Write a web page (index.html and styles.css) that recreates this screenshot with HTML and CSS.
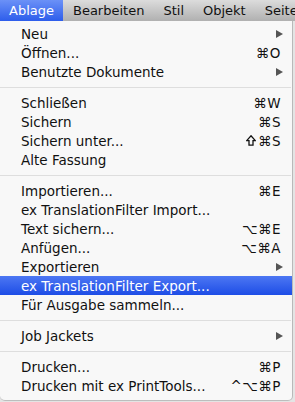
FILE: index.html
```html
<!DOCTYPE html>
<html lang="de">
<head>
<meta charset="utf-8">
<link rel="stylesheet" href="styles.css">
</head>
<body>
<div class="menubar">
  <span class="mb-item active">Ablage</span>
  <span class="mb-item">Bearbeiten</span>
  <span class="mb-item">Stil</span>
  <span class="mb-item">Objekt</span>
  <span class="mb-item">Seite</span>
</div>
<div class="menu">
  <div class="row"><span class="label">Neu</span><span class="arrow"></span></div>
  <div class="row"><span class="label">Öffnen...</span><span class="key">⌘O</span></div>
  <div class="row"><span class="label">Benutzte Dokumente</span><span class="arrow"></span></div>
  <div class="sep"></div>
  <div class="row"><span class="label">Schließen</span><span class="key">⌘W</span></div>
  <div class="row"><span class="label">Sichern</span><span class="key">⌘S</span></div>
  <div class="row"><span class="label">Sichern unter...</span><span class="key"><svg class="shift" width="10" height="11" viewBox="0 0 10 11"><path d="M5 0.8 L9.3 5.6 H7 V10.2 H3 V5.6 H0.7 Z" fill="none" stroke="#111" stroke-width="1.3" stroke-linejoin="miter"/></svg>⌘S</span></div>
  <div class="row"><span class="label">Alte Fassung</span></div>
  <div class="sep"></div>
  <div class="row"><span class="label">Importieren...</span><span class="key">⌘E</span></div>
  <div class="row"><span class="label">ex TranslationFilter Import...</span></div>
  <div class="row"><span class="label">Text sichern...</span><span class="key">⌥⌘E</span></div>
  <div class="row"><span class="label">Anfügen...</span><span class="key">⌥⌘A</span></div>
  <div class="row"><span class="label">Exportieren</span><span class="arrow"></span></div>
  <div class="row selected"><span class="label">ex TranslationFilter Export...</span></div>
  <div class="row"><span class="label">Für Ausgabe sammeln...</span></div>
  <div class="sep"></div>
  <div class="row"><span class="label">Job Jackets</span><span class="arrow"></span></div>
  <div class="sep"></div>
  <div class="row"><span class="label">Drucken...</span><span class="key">⌘P</span></div>
  <div class="row"><span class="label">Drucken mit ex PrintTools...</span><span class="key">^⌥⌘P</span></div>
</div>
</body>
</html>
```
FILE: styles.css
```css
html, body {
  margin: 0;
  padding: 0;
}
body {
  width: 295px;
  height: 402px;
  overflow: hidden;
  background: #e4e4e4;
  font-family: "DejaVu Sans", "Liberation Sans", sans-serif;
  font-size: 13.5px;
  color: #111;
}
.menubar {
  display: flex;
  height: 21px;
  background: linear-gradient(#dcdcdc, #b0b0b0);
  white-space: nowrap;
  overflow: hidden;
}
.mb-item {
  display: flex;
  align-items: center;
  padding: 0 9.5px;
  font-size: 13px;
  color: #111;
  flex-shrink: 0;
}
.mb-item.active {
  padding-left: 9px;
  background: linear-gradient(#6b91f7, #2d5deb);
  color: #fff;
}
.menu {
  width: 293px;
  box-sizing: border-box;
  background: #f8f8f8;
  border-right: 1px solid #b9b9b9;
  border-bottom: 1px solid #bdbdbd;
  border-radius: 0 0 5px 5px;
  padding: 3px 0 5px;
}
.row {
  display: flex;
  align-items: center;
  height: 19px;
  padding: 0 11px 0 21px;
  white-space: nowrap;
}
.label {
  flex: 1;
}
.key {
  display: flex;
  align-items: center;
  letter-spacing: 0.5px;
}
.shift {
  margin-right: 2px;
}
.arrow {
  width: 0;
  height: 0;
  border-top: 4px solid transparent;
  border-bottom: 4px solid transparent;
  border-left: 7px solid #555;
  margin-right: -2px;
}
.selected {
  background: linear-gradient(#4d77f3, #1d4de6);
  color: #fff;
}
.sep {
  height: 1px;
  background: #dedede;
  margin: 6px 1px 5px 0;
}
```
